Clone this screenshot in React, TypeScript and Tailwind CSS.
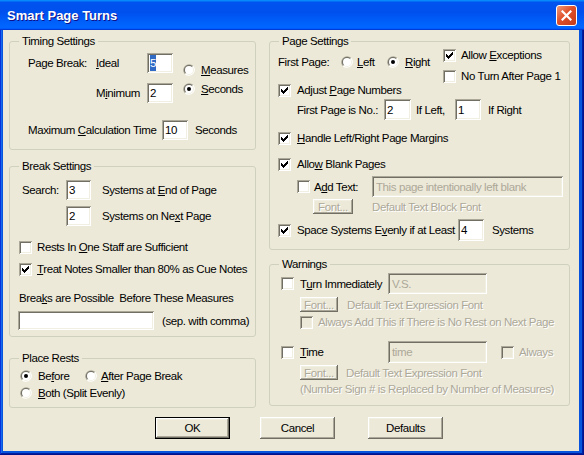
const sunken =
  "shadow-[inset_1px_1px_0_#aca899,inset_-1px_-1px_0_#ffffff,inset_2px_2px_0_#716f64,inset_-2px_-2px_0_#f1efe2]";
const raised =
  "shadow-[inset_-1px_-1px_0_#716f64,inset_1px_1px_0_#ffffff,inset_-2px_-2px_0_#aca899,inset_2px_2px_0_#f1efe2]";
const grayText = "text-[#aca899] [text-shadow:1px_1px_0_#ffffff]";

function Edit({ className, value, disabled }: { className: string; value?: React.ReactNode; disabled?: boolean }) {
  return (
    <div
      className={`${className} ${sunken} ${
        disabled ? "bg-[#ece9d8] text-[#aca899]" : "bg-white"
      } shrink-0 flex items-center pl-[4px] overflow-hidden whitespace-nowrap`}
    >
      {value}
    </div>
  );
}

function Check({ checked, disabled }: { checked?: boolean; disabled?: boolean }) {
  // classic 7x7 tick, row by row
  const rows: [number, number, number][] = [
    [6, 0, 1],
    [5, 1, 2],
    [0, 2, 1],
    [4, 2, 3],
    [0, 3, 2],
    [3, 3, 3],
    [0, 4, 5],
    [1, 5, 3],
    [2, 6, 1],
  ];
  return (
    <span
      className={`w-[13px] h-[13px] shrink-0 flex items-center justify-center ${sunken} ${
        disabled ? "bg-[#ece9d8]" : "bg-white"
      }`}
    >
      {checked && (
        <svg width="7" height="7" viewBox="0 0 7 7" shapeRendering="crispEdges">
          {rows.map(([x, y, w], i) => (
            <rect key={i} x={x} y={y} width={w} height={1} fill="#000" />
          ))}
        </svg>
      )}
    </span>
  );
}

function Radio({ on }: { on?: boolean }) {
  return (
    <svg width="12" height="12" viewBox="0 0 12 12" className="shrink-0">
      <path d="M1.76 10.24 A6 6 0 0 1 10.24 1.76 Z" fill="#aca899" />
      <path d="M10.24 1.76 A6 6 0 0 1 1.76 10.24 Z" fill="#ffffff" />
      <path d="M2.46 9.54 A5 5 0 0 1 9.54 2.46 Z" fill="#716f64" />
      <path d="M9.54 2.46 A5 5 0 0 1 2.46 9.54 Z" fill="#f1efe2" />
      <circle cx="6" cy="6" r="4" fill="#ffffff" />
      {on && <circle cx="6" cy="6" r="2" fill="#000" />}
    </svg>
  );
}

function SmallButton({ className }: { className: string }) {
  return (
    <div className={`${className} ${raised} shrink-0 flex items-center justify-center bg-[#ece9d8] ${grayText}`}>
      Font...
    </div>
  );
}

function Group({ title, className, children }: { title: string; className: string; children: React.ReactNode }) {
  return (
    <div className={`relative box-border border border-[#d0d0bf] rounded-[3px] ${className}`}>
      <span className="absolute -top-[9px] left-[9px] px-[3px] bg-[#ece9d8] leading-[16px] whitespace-nowrap">
        {title}
      </span>
      {children}
    </div>
  );
}

function Row({ className, children }: { className: string; children: React.ReactNode }) {
  return <div className={`flex items-center whitespace-nowrap ${className}`}>{children}</div>;
}

export default function App() {
  return (
    <div className="w-[584px] h-[455px] flex flex-col bg-[#0855dd] shadow-[inset_-1px_-1px_0_#00138c,inset_1px_1px_0_#0831d9,inset_-2px_-2px_0_#001ea0,inset_2px_2px_0_#166aee] text-black text-[11.5px] tracking-[-0.4px] leading-[16px] font-[family-name:'Liberation_Sans',Arial,sans-serif] select-none">
      {/* Title bar */}
      <div className="h-[30px] shrink-0 flex items-center justify-between pl-[7px] pr-[7px] bg-[linear-gradient(180deg,#0997ff,#0053ee_8%,#0050ee_40%,#0066ff_88%,#0066ff_93%,#005bff_95%,#003dd7_96%,#003dd7)]">
        <span className="pt-[1px] text-white font-bold text-[13px] tracking-normal [text-shadow:1px_1px_0_#0f1089]">
          Smart Page Turns
        </span>
        <div className="w-[21px] h-[21px] rounded-[3px] border border-white bg-[linear-gradient(135deg,#f09a7a,#e0502a_45%,#c53b17)] flex items-center justify-center">
          <svg width="11" height="11" viewBox="0 0 11 11">
            <path d="M1.5 1.5 L9.5 9.5 M9.5 1.5 L1.5 9.5" stroke="#fff" strokeWidth="2.2" strokeLinecap="square" />
          </svg>
        </div>
      </div>

      {/* Body */}
      <div className="flex-1 ml-[3px] mr-[5px] mb-[4px] bg-[#ece9d8] flex flex-col">
        <div className="flex pl-[6px] pt-[11px]">
          {/* Left column */}
          <div className="w-[247px] flex flex-col">
            <Group title="Timing Settings" className="h-[109px]">
              <div className="flex mt-[11px]">
                <div className="flex flex-col gap-[10px]">
                  <Row className="h-[20px]">
                    <span className="w-[86px] pl-[18px]">Page Break:</span>
                    <span className="w-[51px]">
                      <u>I</u>deal
                    </span>
                    <Edit
                      className="w-[26px] h-[20px] !pl-[3px]"
                      value={<span className="bg-[#316ac5] text-white">5</span>}
                    />
                  </Row>
                  <Row className="h-[20px]">
                    <span className="w-[51px] ml-[86px]">
                      M<u>i</u>nimum
                    </span>
                    <Edit className="w-[26px] h-[20px] !pl-[3px]" value="2" />
                  </Row>
                </div>
                <div className="flex flex-col ml-[10px] mt-[8px] gap-[1px]">
                  <Row className="h-[18px]">
                    <Radio />
                    <span className="ml-[6px]">
                      <u>M</u>easures
                    </span>
                  </Row>
                  <Row className="h-[18px]">
                    <Radio on />
                    <span className="ml-[6px]">
                      <u>S</u>econds
                    </span>
                  </Row>
                </div>
              </div>
              <Row className="h-[20px] mt-[17px]">
                <span className="w-[152px] pl-[18px]">
                  Maximum <u>C</u>alculation Time
                </span>
                <Edit className="w-[26px] h-[20px] !pl-[3px]" value="10" />
                <span className="ml-[7px]">Seconds</span>
              </Row>
            </Group>

            <Group title="Break Settings" className="h-[171px] mt-[16px]">
              <Row className="h-[20px] mt-[13px]">
                <span className="w-[56px] pl-[12px]">Search:</span>
                <Edit className="w-[25px] h-[20px] !pl-[3px]" value="3" />
                <span className="ml-[11px]">
                  Systems at <u>E</u>nd of Page
                </span>
              </Row>
              <Row className="h-[20px] mt-[6px]">
                <span className="w-[56px]" />
                <Edit className="w-[25px] h-[20px] !pl-[3px]" value="2" />
                <span className="ml-[11px]">
                  Systems on Ne<u>x</u>t Page
                </span>
              </Row>
              <Row className="h-[16px] mt-[13px] pl-[9px]">
                <Check />
                <span className="ml-[5px]">
                  Rests In <u>O</u>ne Staff are Sufficient
                </span>
              </Row>
              <Row className="h-[16px] mt-[6px] pl-[9px]">
                <Check checked />
                <span className="ml-[5px]">
                  <u>T</u>reat Notes Smaller than 80% as Cue Notes
                </span>
              </Row>
              <Row className="h-[16px] mt-[13px] pl-[9px]">
                <span>
                  Brea<u>k</u>s are Possible&nbsp; Before These Measures
                </span>
              </Row>
              <Row className="h-[19px] mt-[5px] pl-[8px]">
                <Edit className="w-[136px] h-[19px]" />
                <span className="ml-[8px]">(sep. with comma)</span>
              </Row>
            </Group>

            <Group title="Place Rests" className="h-[50px] mt-[21px]">
              <Row className="h-[16px] mt-[9px] pl-[10px]">
                <Radio on />
                <span className="ml-[6px] w-[47px]">
                  Be<u>f</u>ore
                </span>
                <Radio />
                <span className="ml-[4px]">
                  <u>A</u>fter Page Break
                </span>
              </Row>
              <Row className="h-[16px] mt-[1px] pl-[10px]">
                <Radio />
                <span className="ml-[6px]">
                  <u>B</u>oth (Split Evenly)
                </span>
              </Row>
            </Group>
          </div>

          {/* Right column */}
          <div className="w-[301px] ml-[13px] flex flex-col">
            <Group title="Page Settings" className="h-[209px]">
              <div className="flex h-[40px] items-start">
                <Row className="w-[173px] h-[16px] mt-[12px]">
                  <span className="w-[71px] pl-[8px]">First Page:</span>
                  <Radio />
                  <span className="ml-[4px] w-[30px]">
                    <u>L</u>eft
                  </span>
                  <Radio on />
                  <span className="ml-[6px]">
                    <u>R</u>ight
                  </span>
                </Row>
                <div className="flex flex-col mt-[5px] gap-[5px]">
                  <Row className="h-[16px]">
                    <Check checked />
                    <span className="ml-[5px]">
                      Allow <u>E</u>xceptions
                    </span>
                  </Row>
                  <Row className="h-[16px]">
                    <Check />
                    <span className="ml-[5px]">No Turn After Page 1</span>
                  </Row>
                </div>
              </div>
              <Row className="h-[16px] pl-[8px]">
                <Check checked />
                <span className="ml-[6px]">
                  Adjust <u>P</u>age Numbers
                </span>
              </Row>
              <Row className="h-[21px] mt-[1px] pl-[27px]">
                <span className="w-[87px]">First Page is No.:</span>
                <Edit className="w-[27px] h-[21px] !pl-[3px]" value="2" />
                <span className="ml-[5px] w-[39px]">If Left,</span>
                <Edit className="w-[26px] h-[21px] !pl-[3px]" value="1" />
                <span className="ml-[7px]">If Right</span>
              </Row>
              <Row className="h-[16px] mt-[10px] pl-[8px]">
                <Check checked />
                <span className="ml-[6px]">
                  <u>H</u>andle Left/Right Page Margins
                </span>
              </Row>
              <Row className="h-[16px] mt-[10px] pl-[8px]">
                <Check checked />
                <span className="ml-[6px]">
                  Allo<u>w</u> Blank Pages
                </span>
              </Row>
              <Row className="h-[21px] mt-[4px] pl-[27px]">
                <Check />
                <span className="ml-[4px] w-[58px]">
                  A<u>d</u>d Text:
                </span>
                <Edit className="w-[191px] h-[21px]" value="This page intentionally left blank" disabled />
              </Row>
              <Row className="h-[15px] mt-[2px] pl-[43px]">
                <SmallButton className="w-[40px] h-[15px]" />
                <span className={`ml-[19px] ${grayText}`}>Default Text Block Font</span>
              </Row>
              <Row className="h-[22px] mt-[5px] pl-[8px]">
                <Check checked />
                <span className="ml-[6px] w-[161px]">
                  Space Systems E<u>v</u>enly if at Least
                </span>
                <Edit className="w-[26px] h-[22px] !pl-[3px]" value="4" />
                <span className="ml-[8px]">Systems</span>
              </Row>
            </Group>

            <Group title="Warnings" className="h-[142px] mt-[14px]">
              <Row className="h-[21px] mt-[8px] pl-[11px]">
                <Check />
                <span className="ml-[6px] w-[88px]">
                  T<u>u</u>rn Immediately
                </span>
                <Edit className="w-[99px] h-[21px]" value="V.S." disabled />
              </Row>
              <Row className="h-[15px] mt-[3px] pl-[30px]">
                <SmallButton className="w-[38px] h-[15px]" />
                <span className={`ml-[9px] ${grayText}`}>Default Text Expression Font</span>
              </Row>
              <Row className="h-[16px] mt-[2px] pl-[30px]">
                <Check disabled />
                <span className={`ml-[5px] ${grayText}`}>Always Add This if There is No Rest on Next Page</span>
              </Row>
              <Row className="h-[22px] mt-[11px] pl-[11px]">
                <Check />
                <span className="ml-[6px] w-[88px]">
                  <u>T</u>ime
                </span>
                <Edit className="w-[99px] h-[22px]" value="time" disabled />
                <span className="ml-[14px]">
                  <Check disabled />
                </span>
                <span className={`ml-[5px] ${grayText}`}>Always</span>
              </Row>
              <Row className="h-[15px] mt-[2px] pl-[30px]">
                <SmallButton className="w-[38px] h-[15px]" />
                <span className={`ml-[8px] ${grayText}`}>Default Text Expression Font</span>
              </Row>
              <Row className="h-[16px] mt-[1px] pl-[30px]">
                <span className={grayText}>(Number Sign # is Replaced by Number of Measures)</span>
              </Row>
            </Group>
          </div>
        </div>

        {/* Buttons */}
        <div className="flex mt-[9px] pl-[152px]">
          <div className={`w-[75px] h-[22px] border border-black ${raised} flex items-center justify-center`}>OK</div>
          <div className={`w-[75px] h-[22px] ml-[30px] ${raised} flex items-center justify-center`}>Cancel</div>
          <div className={`w-[75px] h-[22px] ml-[33px] ${raised} flex items-center justify-center`}>Defaults</div>
        </div>
      </div>
    </div>
  );
}
